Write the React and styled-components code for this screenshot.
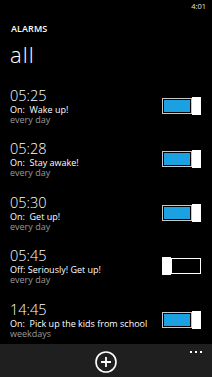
import React from 'react';
import styled, { createGlobalStyle } from 'styled-components';

const GlobalStyle = createGlobalStyle`
  html, body {
    margin: 0;
    padding: 0;
    background: #000000;
  }
  body {
    font-family: "Open Sans", "Noto Sans", sans-serif;
    color: #ffffff;
  }
`

const Screen = styled.div`
  width: 212px;
  height: 377px;
  display: flex;
  flex-direction: column;
  overflow: hidden;
  background: #000000;
`

const StatusBar = styled.div`
  height: 14px;
  display: flex;
  justify-content: flex-end;
  align-items: flex-start;
  padding: 2px 6px 0 0;
  box-sizing: border-box;
  font-size: 7.5px;
  line-height: 9px;
  color: #e0e0e0;
`

const Header = styled.div`
  padding: 8.5px 0 0 11px;
`

const AppName = styled.div`
  font-size: 9px;
  line-height: 12px;
  font-weight: 600;
  letter-spacing: 0.1px;
`

const PageTitle = styled.div`
  margin-top: 6px;
  font-size: 22px;
  line-height: 26px;
  font-weight: 300;
  letter-spacing: 1px;
  margin-left: -1px;
`

const List = styled.div`
  flex: 1;
  overflow: hidden;
  padding-top: 21px;
`

const Item = styled.div`
  height: 53.5px;
  display: flex;
  align-items: flex-start;
  justify-content: space-between;
  padding: 0 11px 0 10px;
`

const Info = styled.div`
  display: flex;
  flex-direction: column;
`

const Time = styled.div`
  font-size: 14.5px;
  line-height: 16px;
  font-weight: 300;
`

const Label = styled.div`
  font-size: 9px;
  line-height: 11px;
  white-space: pre;
`

const Repeat = styled.div`
  font-size: 9px;
  line-height: 9px;
  color: #9a9a9a;
`

const Switch = styled.div`
  display: flex;
  flex-direction: ${p => (p.$on ? 'row' : 'row-reverse')};
  align-items: center;
  margin-top: 9px;
`

const Track = styled.div`
  width: 30px;
  height: 16px;
  box-sizing: border-box;
  border: 1px solid ${p => (p.$on ? '#c8c8c8' : '#ffffff')};
  padding: 1px;
  background: #000000;
`

const Fill = styled.div`
  width: 100%;
  height: 100%;
  background: ${p => (p.$on ? '#1ba1e2' : 'transparent')};
`

const Knob = styled.div`
  width: 9px;
  height: 18px;
  background: #ffffff;
`

const AppBar = styled.div`
  height: 33px;
  flex-shrink: 0;
  background: #1f1f1f;
  display: flex;
  justify-content: center;
  align-items: flex-start;
  position: relative;
`

const RoundButton = styled.div`
  margin-top: 7px;
  width: 22px;
  height: 22px;
  display: flex;
`

const More = styled.div`
  position: absolute;
  right: 10px;
  top: 7px;
  display: flex;
  gap: 3px;

  span {
    width: 2px;
    height: 2px;
    background: #ffffff;
  }
`

const alarms = [
  { time: '05:25', on: true, label: 'Wake up!', repeat: 'every day' },
  { time: '05:28', on: true, label: 'Stay awake!', repeat: 'every day' },
  { time: '05:30', on: true, label: 'Get up!', repeat: 'every day' },
  { time: '05:45', on: false, label: 'Seriously! Get up!', repeat: 'every day' },
  { time: '14:45', on: true, label: 'Pick up the kids from school', repeat: 'weekdays' },
]

const App = () => {
  return (
    <Screen>
      <GlobalStyle />
      <StatusBar>4:01</StatusBar>
      <Header>
        <AppName>ALARMS</AppName>
        <PageTitle>all</PageTitle>
      </Header>
      <List>
        {alarms.map(a => (
          <Item key={a.time}>
            <Info>
              <Time>{a.time}</Time>
              <Label>{(a.on ? 'On:  ' : 'Off: ') + a.label}</Label>
              <Repeat>{a.repeat}</Repeat>
            </Info>
            <Switch $on={a.on}>
              <Track $on={a.on}>
                <Fill $on={a.on} />
              </Track>
              <Knob />
            </Switch>
          </Item>
        ))}
      </List>
      <AppBar>
        <RoundButton>
          <svg width="22" height="22" viewBox="0 0 22 22">
            <circle cx="11" cy="11" r="10" fill="none" stroke="#ffffff" strokeWidth="1.6" />
            <path d="M11 6v10M6 11h10" stroke="#ffffff" strokeWidth="1.8" />
          </svg>
        </RoundButton>
        <More>
          <span />
          <span />
          <span />
        </More>
      </AppBar>
    </Screen>
  )
}

export default App;
